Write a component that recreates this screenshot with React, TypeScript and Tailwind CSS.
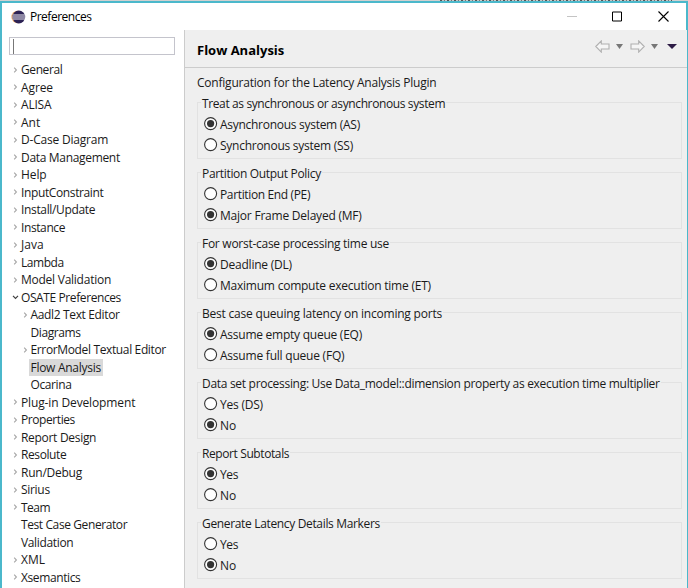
import React from "react";

type TreeItem = { label: string; level?: number; state?: "closed" | "open" | "leaf"; selected?: boolean; tracking?: string };

const tree: TreeItem[] = [
  { label: "General", tracking: "tracking-[-0.4px]" },
  { label: "Agree", tracking: "tracking-[-0.1px]" },
  { label: "ALISA", tracking: "tracking-[-0.2px]" },
  { label: "Ant", tracking: "tracking-normal" },
  { label: "D-Case Diagram", tracking: "tracking-[-0.2px]" },
  { label: "Data Management", tracking: "tracking-[-0.32px]" },
  { label: "Help", tracking: "tracking-[-0.1px]" },
  { label: "InputConstraint", tracking: "tracking-[-0.38px]" },
  { label: "Install/Update", tracking: "tracking-[-0.35px]" },
  { label: "Instance", tracking: "tracking-[-0.4px]" },
  { label: "Java", tracking: "tracking-normal" },
  { label: "Lambda", tracking: "tracking-[-0.45px]" },
  { label: "Model Validation", tracking: "tracking-[-0.25px]" },
  { label: "OSATE Preferences", state: "open", tracking: "tracking-[-0.4px]" },
  { label: "Aadl2 Text Editor", level: 1, tracking: "tracking-[-0.35px]" },
  { label: "Diagrams", level: 1, state: "leaf", tracking: "tracking-[-0.4px]" },
  { label: "ErrorModel Textual Editor", level: 1, tracking: "tracking-[-0.36px]" },
  { label: "Flow Analysis", level: 1, state: "leaf", selected: true, tracking: "tracking-[-0.28px]" },
  { label: "Ocarina", level: 1, state: "leaf", tracking: "tracking-[-0.4px]" },
  { label: "Plug-in Development", tracking: "tracking-[-0.13px]" },
  { label: "Properties", tracking: "tracking-[-0.42px]" },
  { label: "Report Design", tracking: "tracking-[-0.3px]" },
  { label: "Resolute", tracking: "tracking-[-0.4px]" },
  { label: "Run/Debug", tracking: "tracking-[-0.25px]" },
  { label: "Sirius", tracking: "tracking-[-0.3px]" },
  { label: "Team", tracking: "tracking-[-0.5px]" },
  { label: "Test Case Generator", state: "leaf", tracking: "tracking-[-0.4px]" },
  { label: "Validation", state: "leaf", tracking: "tracking-[-0.35px]" },
  { label: "XML", tracking: "tracking-normal" },
  { label: "Xsemantics", tracking: "tracking-[-0.4px]" },
];

type Option = { label: string; tracking: string };
type Group = { title: string; tracking: string; options: Option[]; chosen: number };

const groups: Group[] = [
  {
    title: "Treat as synchronous or asynchronous system",
    tracking: "tracking-[-0.38px]",
    options: [
      { label: "Asynchronous system (AS)", tracking: "tracking-[-0.28px]" },
      { label: "Synchronous system (SS)", tracking: "tracking-[-0.26px]" },
    ],
    chosen: 0,
  },
  {
    title: "Partition Output Policy",
    tracking: "tracking-[-0.33px]",
    options: [
      { label: "Partition End (PE)", tracking: "tracking-[-0.36px]" },
      { label: "Major Frame Delayed (MF)", tracking: "tracking-[-0.22px]" },
    ],
    chosen: 1,
  },
  {
    title: "For worst-case processing time use",
    tracking: "tracking-[-0.27px]",
    options: [
      { label: "Deadline (DL)", tracking: "tracking-[-0.22px]" },
      { label: "Maximum compute execution time (ET)", tracking: "tracking-[-0.23px]" },
    ],
    chosen: 0,
  },
  {
    title: "Best case queuing latency on incoming ports",
    tracking: "tracking-[-0.21px]",
    options: [
      { label: "Assume empty queue (EQ)", tracking: "tracking-[-0.25px]" },
      { label: "Assume full queue (FQ)", tracking: "tracking-[-0.22px]" },
    ],
    chosen: 0,
  },
  {
    title: "Data set processing: Use Data_model::dimension property as execution time multiplier",
    tracking: "tracking-[-0.3px]",
    options: [
      { label: "Yes (DS)", tracking: "tracking-[-0.22px]" },
      { label: "No", tracking: "tracking-normal" },
    ],
    chosen: 1,
  },
  {
    title: "Report Subtotals",
    tracking: "tracking-[-0.4px]",
    options: [
      { label: "Yes", tracking: "tracking-[-0.4px]" },
      { label: "No", tracking: "tracking-normal" },
    ],
    chosen: 0,
  },
  {
    title: "Generate Latency Details Markers",
    tracking: "tracking-[-0.34px]",
    options: [
      { label: "Yes", tracking: "tracking-[-0.4px]" },
      { label: "No", tracking: "tracking-normal" },
    ],
    chosen: 1,
  },
];

function EclipseLogo() {
  return (
    <svg width="15" height="14" viewBox="0 0 15 14" className="block shrink-0">
      <circle cx="6.6" cy="7" r="6.2" fill="#f0a860" />
      <circle cx="7.8" cy="7" r="6.4" fill="#2c2255" />
      <path d="M1.6 5h12.4M1.3 7h13M1.6 9h12.4" stroke="#f0eef5" strokeWidth="1" />
    </svg>
  );
}

function Expander({ state }: { state: "closed" | "open" | "leaf" }) {
  return (
    <svg width="8" height="8" viewBox="0 0 8 8" fill="none" className="block shrink-0">
      {state === "closed" && <path d="M2.2 1.7l2.2 2.3l-2.2 2.3" stroke="#a6a6a6" strokeWidth="1.1" />}
      {state === "open" && <path d="M1 2.8l2.5 2.5L6 2.8" stroke="#404040" strokeWidth="1.2" />}
    </svg>
  );
}

function Radio({ checked }: { checked: boolean }) {
  return (
    <svg width="14" height="14" viewBox="0 0 14 14" className="-mr-px block shrink-0">
      <circle cx="6.6" cy="6.6" r="6" fill="#fff" stroke="#333" strokeWidth="1.1" />
      {checked && <circle cx="6.6" cy="6.6" r="3.6" fill="#333" />}
    </svg>
  );
}

function Arrow({ flip }: { flip?: boolean }) {
  return (
    <svg width="15" height="13" viewBox="0 0 15 13" className={flip ? "block -scale-x-100" : "block"}>
      <path d="M.8 6.5L6.3.9V4H14v5H6.3v3.1z" fill="#f5f5f5" stroke="#b0b0b0" strokeWidth="1.1" />
    </svg>
  );
}

function Caret({ color, wide }: { color: string; wide?: boolean }) {
  return (
    <svg width={wide ? 10 : 7} height="5" viewBox="0 0 10 5" preserveAspectRatio="none" className="block">
      <path d="M0 0h10L5 5z" fill={color} />
    </svg>
  );
}

export default function App() {
  return (
    <div className="flex h-[588px] w-[688px] flex-col overflow-hidden bg-[#d0d0d0] font-['Open_Sans','Noto_Sans',sans-serif] text-[12px] text-[#1a1a1a]">
      <div className="h-px shrink-0 pr-[16px] pl-[440px]">
        <div className="h-px bg-[repeating-linear-gradient(90deg,#555_0_2px,#c4c4c4_2px_4px,#777_4px_5px,#ccc_5px_7px)]" />
      </div>
      <div className="flex h-[29px] shrink-0 items-center border-x-2 border-t-2 border-[#4bb8cb] bg-white pl-[9px]">
        <EclipseLogo />
        <span className="ml-[4px] tracking-[-0.5px] text-black">Preferences</span>
        <svg width="104" height="11" viewBox="0 0 104 11" fill="none" className="mr-[15px] ml-auto block">
          <path d="M0 5.5h10" stroke="#c4c4c4" />
          <path d="M45.5 1h9v9h-9z" stroke="#000" />
          <path d="M91.5.5l10 10M101.5.5l-10 10" stroke="#000" strokeWidth="1.1" />
        </svg>
      </div>
      <div className="flex min-h-0 flex-1 border-r border-l-2 border-[#4bb8cb]">
        <aside className="w-[182px] shrink-0 bg-white pt-[7px]">
          <div className="mb-[6px] ml-[7px] flex h-[18px] w-[166px] items-center border border-[#c4c4cc] pl-[3px]">
            <span className="h-[15px] w-px bg-[#777]" />
          </div>
          {tree.map((item) => (
            <div key={item.label} className={`flex h-[17.5px] items-center ${item.level ? "pl-[19.5px]" : "pl-[10px]"}`}>
              <Expander state={item.state ?? "closed"} />
              <span className={`-ml-[1px] px-[2px] leading-[17px] whitespace-pre ${item.tracking} ${item.selected ? "bg-[#d9d9d9]" : ""}`}>{item.label}</span>
            </div>
          ))}
        </aside>
        <main className="flex min-w-0 flex-1 flex-col border-l border-[#ccc] bg-[#efefef]">
          <header className="flex h-[38px] shrink-0 items-center border-b border-[#ccc] pl-[12px]">
            <h1 className="mt-[4px] text-[13px] font-bold text-black">Flow Analysis</h1>
            <div className="mr-[10px] mb-[5px] ml-auto flex items-center">
              <Arrow />
              <span className="ml-[6px]"><Caret color="#777" /></span>
              <span className="ml-[7px]"><Arrow flip /></span>
              <span className="ml-[6px]"><Caret color="#777" /></span>
              <span className="ml-[9px]"><Caret color="#2d1b45" wide /></span>
            </div>
          </header>
          <p className="mt-[6px] h-[17px] pl-[12px] leading-[17px] tracking-[-0.22px]">Configuration for the Latency Analysis Plugin</p>
          <div className="mt-[11px] flex flex-col gap-[13px] pr-[5px] pl-[12px]">
            {groups.map((group) => (
              <section key={group.title} className="h-[57px] border border-[#e2e2e2]">
                <h2 className={`-mt-[8px] ml-[3px] h-[17px] w-fit bg-[#efefef] px-px leading-[17px] font-normal whitespace-pre ${group.tracking}`}>{group.title}</h2>
                <div className="mt-[1px] pl-[6px]">
                  {group.options.map((option, i) => (
                    <div key={option.label} className="flex h-[21px] items-center">
                      <Radio checked={i === group.chosen} />
                      <span className={`mt-[2px] ml-[3px] leading-[17px] whitespace-pre ${option.tracking}`}>{option.label}</span>
                    </div>
                  ))}
                </div>
              </section>
            ))}
          </div>
        </main>
      </div>
    </div>
  );
}
